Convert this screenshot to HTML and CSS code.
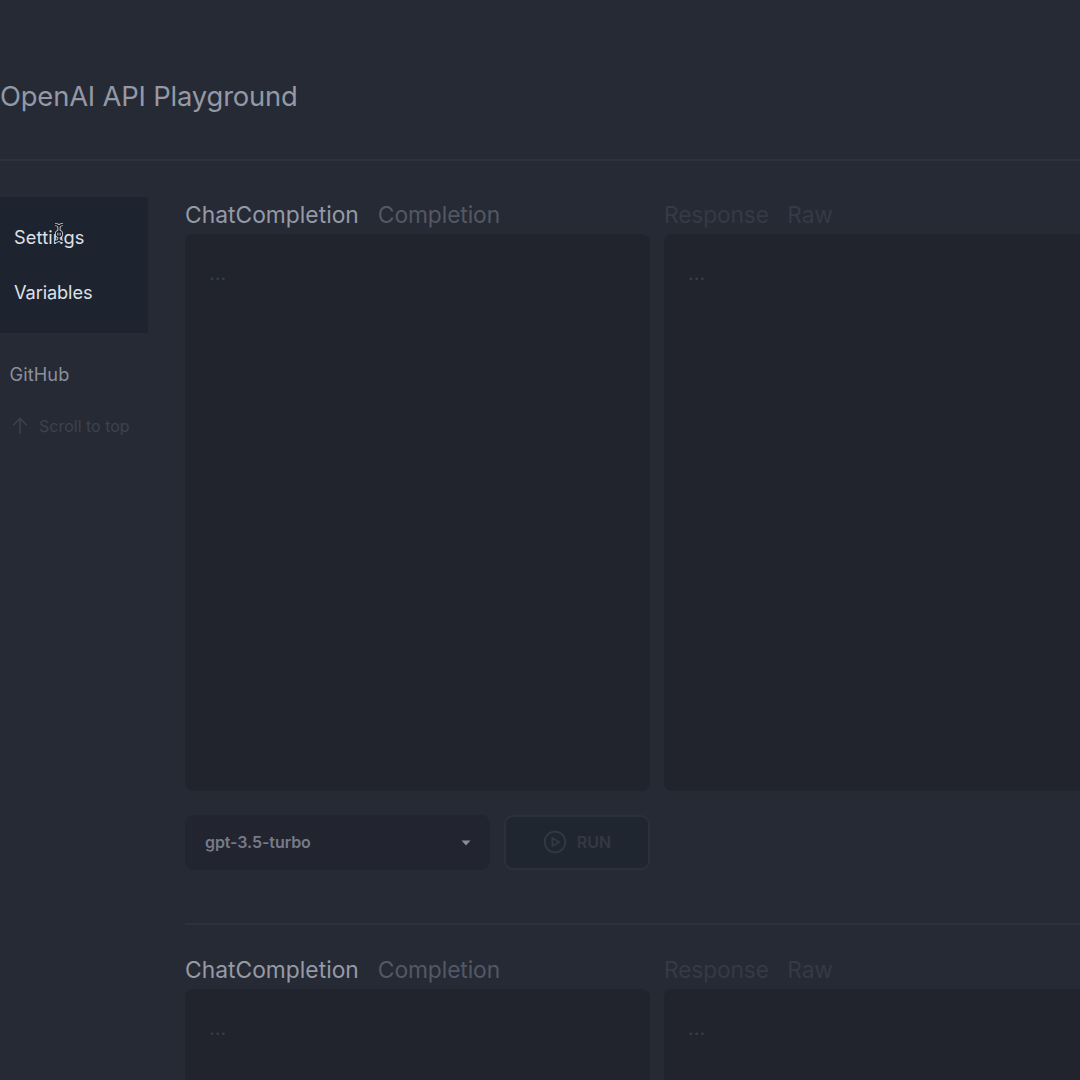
FILE: index.html
```html
<!DOCTYPE html>
<html lang="en">
<head>
<meta charset="utf-8">
<title>OpenAI API Playground</title>
<link rel="stylesheet" href="styles.css">
</head>
<body>
<header class="header"><h1 class="title">OpenAI API Playground</h1></header>
<div class="layout">
  <aside class="sidebar">
    <nav class="menu">
      <a class="menu-item settings">Settings</a>
      <a class="menu-item variables">Variables</a>
    </nav>
    <a class="github">GitHub</a>
    <a class="scroll-top">
      <svg class="arrow" viewBox="0 0 16 18" width="16" height="18"><path d="M8 17V1.5M1.2 8.2 8 1.400l6.8 6.800"/></svg>
      <span>Scroll to top</span>
    </a>
  </aside>
  <main class="main">
    <section class="playground">
      <div class="panes">
        <div class="pane">
          <div class="tabs"><span class="tab active">ChatCompletion</span><span class="tab">Completion</span></div>
          <div class="editor">...</div>
        </div>
        <div class="pane">
          <div class="tabs muted"><span class="tab">Response</span><span class="tab">Raw</span></div>
          <div class="editor">...</div>
        </div>
      </div>
      <div class="controls">
        <div class="select"><span>gpt-3.5-turbo</span><svg class="caret" viewBox="0 0 10 6" width="10" height="6"><path d="M.5.5h9L5 5.500z"/></svg></div>
        <button class="run">
          <svg class="play" viewBox="0 0 24 24" width="24" height="24"><circle cx="12" cy="12" r="10.300"/><path d="M9.300 8v8l7-4z"/></svg>
          <span>RUN</span>
        </button>
      </div>
    </section>
    <section class="playground second">
      <div class="panes">
        <div class="pane">
          <div class="tabs"><span class="tab active">ChatCompletion</span><span class="tab">Completion</span></div>
          <div class="editor">...</div>
        </div>
        <div class="pane">
          <div class="tabs muted"><span class="tab">Response</span><span class="tab">Raw</span></div>
          <div class="editor">...</div>
        </div>
      </div>
    </section>
  </main>
</div>
<svg class="cursor" viewBox="0 0 12 22" width="12" height="22">
  <path class="cursor-edge" d="M2 2.500q3.200 0 4 2.200q.8-2.200 4-2.200M6 4.700v12.600M2 19.500q3.200 0 4-2.200q.8 2.200 4 2.200"/>
  <circle class="cursor-edge" cx="6" cy="12" r="2.500"/>
  <path class="cursor-core" d="M2 2.500q3.200 0 4 2.200q.8-2.200 4-2.200M6 4.700v12.600M2 19.500q3.200 0 4-2.200q.8 2.200 4 2.200"/>
  <circle class="cursor-core" cx="6" cy="12" r="2.500"/>
</svg>
</body>
</html>
```

FILE: styles.css
```css
* { box-sizing: border-box; }
body {
  margin: 0;
  height: 1080px;
  overflow: hidden;
  background: #262a35;
  color: #9499a5;
  font-family: Inter, "Liberation Sans", sans-serif;
}
.header {
  height: 161px;
  padding-top: 76px;
  border-bottom: 2px solid #2d313c;
}
.title { margin: 0; font-size: 27.4px; line-height: 40px; font-weight: 400; letter-spacing: -0.18px; }
.layout { display: flex; height: 919px; overflow: hidden; }
.sidebar { flex: none; width: 148px; padding-top: 36px; }
.menu {
  height: 136px;
  padding: 13px 14px;
  background: #1e242f;
  border-radius: 0 3px 3px 0;
}
.menu-item {
  display: block;
  height: 55px;
  line-height: 55px;
  font-size: 18.2px;
  color: #dfe1e6;
}
.settings { letter-spacing: 0.12px; }
.variables { letter-spacing: -0.1px; }
.github {
  display: block;
  margin: 26px 0 0 9.5px;
  font-size: 18.2px;
  line-height: 30px;
  letter-spacing: 0.1px;
  color: #8b909c;
}
.scroll-top {
  display: flex;
  align-items: center;
  gap: 11px;
  margin: 22px 0 0 12px;
  font-size: 16px;
  line-height: 30px;
  color: #3d424e;
  white-space: nowrap;
}
.arrow { fill: none; stroke: currentColor; stroke-width: 1.5; }
.main { flex: none; width: 943px; margin-left: 37px; }
.playground { padding-top: 36px; }
.panes { display: grid; grid-template-columns: 465px 464px; gap: 14px; }
.tabs {
  display: flex;
  gap: 19px;
  height: 37px;
  line-height: 36px;
  font-size: 22.8px;
  color: #535864;
}
.tab { letter-spacing: -0.1px; }
.tab.active { color: #959aa6; letter-spacing: 0.02px; }
.tabs.muted { gap: 18.5px; color: #343a46; }
.tabs.muted .tab { letter-spacing: -0.16px; }
.editor {
  height: 557px;
  padding: 24px;
  border-radius: 8px;
  background: #21242d;
  color: #383c47;
  font-size: 20px;
  line-height: 30px;
}
.controls { display: flex; gap: 14px; margin-top: 24px; }
.select, .run { display: flex; align-items: center; height: 55px; border-radius: 9px; font-size: 16px; font-weight: 600; }
.select {
  width: 305px;
  justify-content: space-between;
  padding: 0 19px 1px 20px;
  background: #22242f;
  color: #777b87;
}
.select span { letter-spacing: -0.08px; }
.caret { position: relative; top: 1px; fill: #898d98; }
.run {
  width: 146px;
  justify-content: center;
  gap: 10px;
  padding: 0 0 1px;
  border: 2px solid #2b313b;
  background: #20262f;
  color: #333944;
  font-family: inherit;
}
.play { fill: none; stroke: currentColor; stroke-width: 1.7; stroke-linejoin: round; }
.second { margin-top: 53px; border-top: 2px solid #2c323d; padding-top: 27px; }
.cursor { position: absolute; left: 53px; top: 222px; fill: none; }
.cursor-edge { stroke: #c9cbd0; stroke-width: 3.2; }
.cursor-core { stroke: #14161c; stroke-width: 1.3; }
```
